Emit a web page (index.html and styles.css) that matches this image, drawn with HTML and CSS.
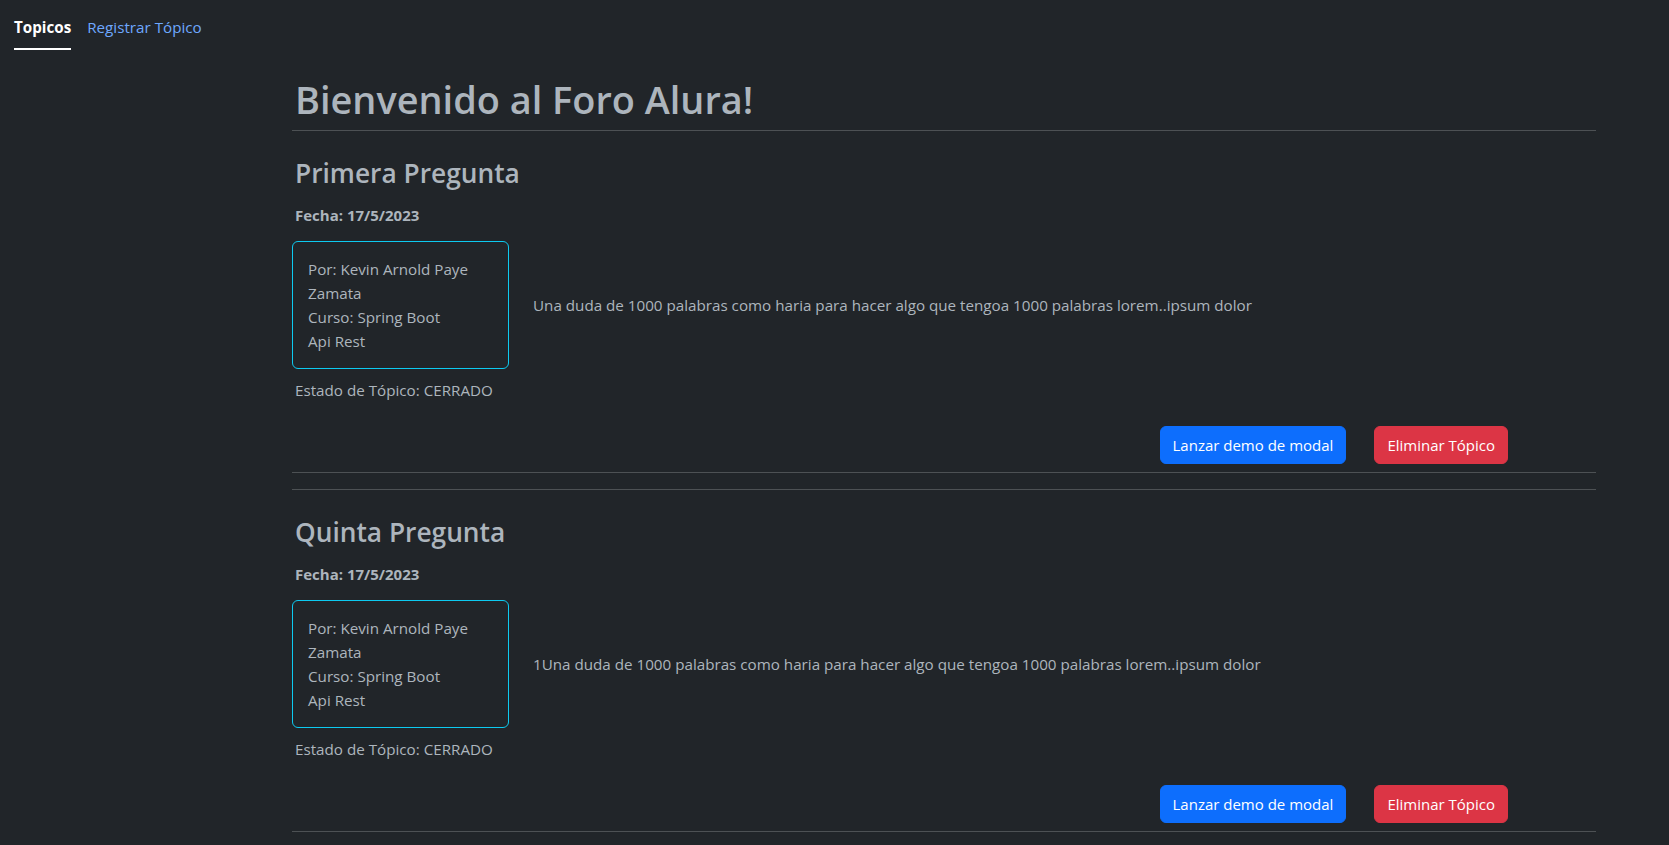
FILE: index.html
```html
<!DOCTYPE html>
<html lang="es">
<head>
<meta charset="utf-8">
<title>Foro Alura</title>
<link rel="stylesheet" href="styles.css">
</head>
<body>
<nav class="nav">
  <a class="nav-link active" href="#">Topicos</a>
  <a class="nav-link" href="#">Registrar Tópico</a>
</nav>
<main class="main">
  <h1 class="title">Bienvenido al Foro Alura!</h1>
  <article class="topic">
    <h3 class="topic-title">Primera Pregunta</h3>
    <p class="fecha">Fecha: 17/5/2023</p>
    <div class="topic-row">
      <div class="author-card">
        <p>Por: Kevin Arnold Paye<br>Zamata</p>
        <p>Curso: Spring Boot<br>Api Rest</p>
      </div>
      <p class="desc">Una duda de 1000 palabras como haria para hacer algo que tengoa 1000 palabras lorem..ipsum dolor</p>
    </div>
    <p class="estado">Estado de Tópico: CERRADO</p>
    <div class="actions">
      <button class="btn btn-primary">Lanzar demo de modal</button>
      <button class="btn btn-danger">Eliminar Tópico</button>
    </div>
  </article>
  <article class="topic">
    <h3 class="topic-title">Quinta Pregunta</h3>
    <p class="fecha">Fecha: 17/5/2023</p>
    <div class="topic-row">
      <div class="author-card">
        <p>Por: Kevin Arnold Paye<br>Zamata</p>
        <p>Curso: Spring Boot<br>Api Rest</p>
      </div>
      <p class="desc">1Una duda de 1000 palabras como haria para hacer algo que tengoa 1000 palabras lorem..ipsum dolor</p>
    </div>
    <p class="estado">Estado de Tópico: CERRADO</p>
    <div class="actions">
      <button class="btn btn-primary">Lanzar demo de modal</button>
      <button class="btn btn-danger">Eliminar Tópico</button>
    </div>
  </article>
</main>
</body>
</html>
```

FILE: styles.css
```css
* { box-sizing: border-box; }
html { background: #212529; }
body {
  margin: 0;
  background: #212529;
  color: #adb5bd;
  font-family: "Open Sans", sans-serif;
  font-size: 15.2px;
  line-height: 24px;
}
p { margin: 0; }

.nav {
  display: flex;
  gap: 16px;
  padding: 8px 0 0 14px;
}
.nav-link {
  padding: 7px 0 9px;
  border-bottom: 2px solid transparent;
  color: #6ea8fe;
  text-decoration: none;
}
.nav-link.active {
  color: #fff;
  font-weight: 700;
  border-bottom-color: #fff;
}

.main {
  padding: 0 73px 0 292px;
}
.title {
  margin: 26px 0 8px;
  font-size: 37.9px;
  line-height: 46px;
  font-weight: 600;
  padding-left: 3px;
}
.topic {
  border-top: 1px solid #4d5154;
  border-bottom: 1px solid #4d5154;
  padding-bottom: 8px;
}
.topic + .topic { margin-top: 16px; }
.topic-title {
  margin: 26px 0 0;
  font-size: 26.3px;
  line-height: 32px;
  font-weight: 600;
  padding-left: 3px;
}
.fecha {
  margin-top: 14px;
  font-size: 15px;
  font-weight: 700;
  padding-left: 3px;
}
.topic-row {
  display: flex;
  align-items: center;
  gap: 24px;
  margin-top: 14px;
}
.author-card {
  width: 217px;
  flex: none;
  border: 1px solid #0dcaf0;
  border-radius: 6px;
  padding: 15px;
  white-space: nowrap;
}
.estado {
  margin-top: 9px;
  padding-left: 3px;
}
.actions {
  display: flex;
  justify-content: flex-end;
  gap: 28px;
  margin-top: 24px;
  padding-right: 88px;
}
.btn {
  font-family: inherit;
  font-size: 15px;
  line-height: 24px;
  padding: 6px 12px;
  border: 1px solid transparent;
  border-radius: 6px;
  color: #fff;
}
.btn-primary { background: #0d6efd; border-color: #0d6efd; }
.btn-danger { background: #dc3545; border-color: #dc3545; }
```
